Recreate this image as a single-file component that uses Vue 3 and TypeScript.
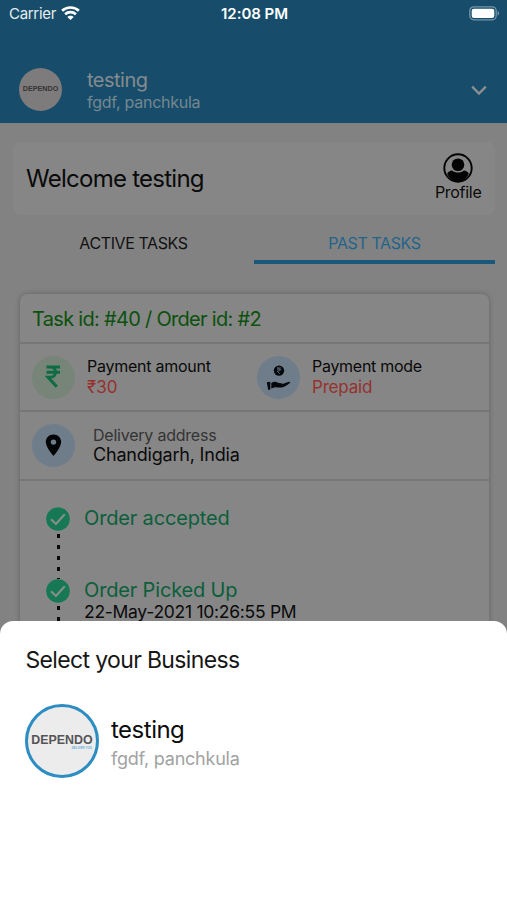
<script setup lang="ts">
interface Step {
  title: string
  time?: string
}

const steps: Step[] = [
  { title: 'Order accepted' },
  { title: 'Order Picked Up', time: '22-May-2021 10:26:55 PM' },
]
const business = { name: 'testing', place: 'fgdf, panchkula' }
</script>

<template>
  <div class="screen">
    <header class="header">
      <div class="status">
        <div class="carrier">
          <span class="carrier-name">Carrier</span>
          <svg width="19" height="15" viewBox="0 0 19 15" fill="none" stroke="#fff" stroke-width="2.6">
            <path d="M1.1 4.800C5.800.3 13.200.3 17.900 4.800" />
            <path d="M4.100 8.200c3-2.800 7.800-2.800 10.800 0" />
            <path d="M6.300 10.900c1.700-1.700 4.700-1.700 6.400 0l-3.200 3.200z" fill="#fff" stroke="none" />
          </svg>
        </div>
        <span class="clock">12:08 PM</span>
        <svg class="battery" width="31" height="15" viewBox="0 0 31 15">
          <rect x=".8" y=".8" width="26.4" height="13" rx="4" fill="none" stroke="#7695a8" stroke-width="1.3" />
          <rect x="2.7" y="2.7" width="22.6" height="9.2" rx="2.2" fill="#fff" />
          <path d="M28.600 5v4.600c2-.7 2-3.900 0-4.600z" fill="#7695a8" />
        </svg>
      </div>
      <div class="account">
        <div class="logo logo-small"><span>DEPENDO</span></div>
        <div class="account-text">
          <span class="account-name">{{ business.name }}</span>
          <span class="account-place">{{ business.place }}</span>
        </div>
        <svg width="16" height="11" viewBox="0 0 16 11" fill="none" stroke="#8b8f92" stroke-width="2.3">
          <path d="M1.200 1.600 8 8.500l6.800-6.900" />
        </svg>
      </div>
    </header>

    <section class="welcome">
      <span class="welcome-text">Welcome testing</span>
      <div class="profile">
        <svg width="30" height="30" viewBox="0 0 30 30">
          <circle cx="15" cy="15" r="13.7" fill="none" stroke="#030303" stroke-width="1.9" />
          <circle cx="15" cy="11.7" r="6.3" fill="#030303" />
          <path d="M4.200 20.500c1-1.800 2.800-2.700 4.900-3 3.200 2.700 8.600 2.700 11.800 0 2.100.3 3.900 1.200 4.900 3-1.900 4.900-6 8-10.800 8s-8.900-3.100-10.800-8z" fill="#030303" />
        </svg>
        <span>Profile</span>
      </div>
    </section>

    <nav class="tabs">
      <span class="tab">ACTIVE TASKS</span>
      <span class="tab selected">PAST TASKS</span>
    </nav>

    <section class="task">
      <h2 class="task-id">Task id: #40 / Order id: #2</h2>
      <div class="row">
        <div class="cell">
          <div class="bubble green">
            <svg class="rupee" width="16" height="23" viewBox="0 0 16 23" fill="none" stroke="#0d6c43" stroke-width="3">
              <path d="M1.500 2h13.500M1.500 7.200h13.500M1.500 2h4.300c6.300 0 6.300 10.200 0 10.200H3l8.800 9.500" />
            </svg>
          </div>
          <div class="info">
            <span class="label amount-label">Payment amount</span>
            <span class="value amount">₹30</span>
          </div>
        </div>
        <div class="cell">
          <div class="bubble blue">
            <svg class="hand" width="25" height="26" viewBox="0 0 25 26" fill="#05080b">
              <circle cx="13" cy="5.6" r="5.2" />
              <path d="M11 3h4.200M11 4.800h4.200M11 3c4 0 4 3.300.3 3.300l2.500 2.500" fill="none" stroke="#66788a" stroke-width=".8" />
              <path d="M.8 17.200l3.500-.4v7.800l-2.100.3zM5.300 17.900c2.300-1.400 4.600-1.500 6.700-.1 1.200.6 3 .3 4.400.5-.2.700-.8.900-1.400 1.100 3.200-.6 5.600-2.400 8.400-2.700 1.300 0 .8 1.200.1 1.600-2.800 2-4.900 3.900-7.900 4.200-2.600.3-4.500-.5-6.700-.2l-3.600 1.100z" />
            </svg>
          </div>
          <div class="info">
            <span class="label mode-label">Payment mode</span>
            <span class="value prepaid">Prepaid</span>
          </div>
        </div>
      </div>
      <div class="row">
        <div class="cell address">
          <div class="bubble blue">
            <svg width="17" height="23" viewBox="0 0 17 23">
              <path fill="#030405" fill-rule="evenodd" d="M8.500.5C4 .5.800 3.900.800 8.100c0 5.300 7.700 14 7.700 14s7.700-8.700 7.700-14C16.200 3.900 13 .5 8.500.5zm0 4.900a2.700 2.700 0 1 1 0 5.400 2.700 2.700 0 0 1 0-5.400z" />
            </svg>
          </div>
          <div class="info">
            <span class="label address-label">Delivery address</span>
            <span class="address-value">Chandigarh, India</span>
          </div>
        </div>
      </div>
      <ol class="steps">
        <li v-for="step in steps" :key="step.title" class="step">
          <div class="marker">
            <svg width="24" height="24" viewBox="0 0 24 24">
              <circle cx="12" cy="12" r="11.8" fill="#177856" />
              <path d="M5 12.200l4.900 4.700 8.900-9.600" fill="none" stroke="#858f8a" stroke-width="2.1" />
            </svg>
            <div class="dashes"></div>
          </div>
          <div class="step-text">
            <span class="step-title">{{ step.title }}</span>
            <span v-if="step.time" class="step-time">{{ step.time }}</span>
          </div>
        </li>
      </ol>
    </section>

    <section class="sheet">
      <h1 class="sheet-title">Select your Business</h1>
      <div class="business">
        <div class="logo logo-large"><span>DEPENDO</span><small>DELIVER YOU</small></div>
        <div class="business-text">
          <span class="business-name">{{ business.name }}</span>
          <span class="business-place">{{ business.place }}</span>
        </div>
      </div>
    </section>
  </div>
</template>

<style>
body {
  margin: 0;
  background: #828282;
}
</style>

<style scoped>
.screen {
  position: relative;
  width: 507px;
  height: 900px;
  overflow: hidden;
  background: #828282;
  color: #0a0a0a;
  font-family: Inter, "Liberation Sans", sans-serif;
  font-size: 16px;
  white-space: nowrap;
}
.screen * { box-sizing: border-box; }
svg { display: block; flex: none; }
h1, h2, ol { margin: 0; padding: 0; font-weight: 400; list-style: none; }

.header { height: 123px; background: #174d6a; }
.status {
  display: grid;
  grid-template-columns: 1fr auto 1fr;
  align-items: center;
  height: 27px;
  padding: 0 7px 0 9px;
  color: #fff;
}
.carrier { display: flex; align-items: center; gap: 5px; }
.carrier-name { font-size: 15px; letter-spacing: -.3px; color: #e6edf1; }
.clock { font-size: 15px; font-weight: 600; letter-spacing: -.05px; }
.battery { justify-self: end; }
.account { display: flex; align-items: flex-start; height: 96px; padding: 0 20px 0 19px; }
.account > svg { margin-top: 58px; }
.account-text { display: flex; flex: 1; flex-direction: column; margin: 42px 0 0 25px; }
.account-name { font-size: 20px; line-height: 22px; letter-spacing: -.5px; color: #858b8f; }
.account-place { font-size: 16px; line-height: 22px; letter-spacing: -.27px; color: #748790; }

.logo {
  display: flex;
  flex: none;
  flex-direction: column;
  align-items: center;
  justify-content: center;
  border-radius: 50%;
  font-family: "Liberation Sans", sans-serif;
  font-weight: 700;
}
.logo-small { width: 43px; height: 43px; margin-top: 41px; background: #7d7b7c; color: #343434; font-size: 7.2px; }
.logo-small span { margin-top: -2px; }
.logo-large { padding-top: 2px; width: 74px; height: 74px; border: 3px solid #2c8dc3; background: #ececed; color: #555457; font-size: 12.4px; }
.logo-large span { line-height: 11px; }
.logo-large small { align-self: flex-end; margin-right: 4px; font-size: 3px; line-height: 4px; color: #69b2d2; }

.welcome {
  display: flex;
  align-items: center;
  justify-content: space-between;
  height: 73px;
  margin: 19px 12px 0 13px;
  padding: 0 13px;
  border-radius: 8px;
  background: #868686;
}
.welcome-text { font-size: 24px; letter-spacing: -.74px; }
.profile { display: flex; flex-direction: column; align-items: center; margin-right: .5px; line-height: 20px; letter-spacing: -.28px; }
.profile svg { margin-top: -2px; }
.profile span { margin-top: -1px; }

.tabs { display: flex; height: 49px; padding: 0 12px 0 13px; }
.tab { flex: 1; padding-top: 18px; border-bottom: 4px solid transparent; line-height: 20px; letter-spacing: -.4px; text-align: center; color: #111; }
.selected { border-color: #1a577b; color: #23648a; }

.task {
  width: 469px;
  height: 400px;
  margin: 30px 0 0 20px;
  border-radius: 7px;
  background: #868686;
  box-shadow: 0 0 5px rgba(0, 0, 0, .25);
}
.task-id { height: 50px; padding-left: 12px; border-bottom: 2px solid #767676; font-size: 20px; line-height: 50px; letter-spacing: -.7px; color: #0b510c; }
.row { display: flex; height: 68px; border-bottom: 2px solid #767676; }
.row + .row { height: 69px; }
.cell { display: flex; flex: none; align-items: center; gap: 12px; width: 225px; padding-left: 12px; }
.bubble { display: flex; flex: none; align-items: center; justify-content: center; width: 43px; height: 43px; border-radius: 50%; }
.green { background: #778478; }
.blue { background: #6f7d8a; }
.rupee { margin: -2px 1px 0 0; }
.hand { margin: 1px 1px 0 0; }
.info { display: flex; flex-direction: column; line-height: 21px; }
.address { gap: 18px; }
.address .info { margin-top: -1px; line-height: 20px; }
.amount-label { letter-spacing: -.25px; }
.mode-label { letter-spacing: -.28px; }
.address-label { letter-spacing: -.22px; color: #343434; }
.value { font-size: 17px; color: #96312f; }
.prepaid { letter-spacing: -.2px; }
.address-value { font-size: 18px; letter-spacing: -.2px; }

.steps { padding: 26px 0 0 26px; }
.step { display: flex; height: 72px; gap: 14px; }
.marker { display: flex; flex-direction: column; align-items: center; width: 24px; }
.dashes {
  flex: 1;
  width: 2.5px;
  margin: 3px 0 0 1px;
  background: repeating-linear-gradient(#080808 0 4px, transparent 4px 11px);
}
.step-text { display: flex; flex-direction: column; }
.step-title { font-size: 20px; line-height: 22px; letter-spacing: -.16px; color: #0b5f3b; }
.step-time { font-size: 17.5px; line-height: 22px; letter-spacing: -.28px; }

.sheet {
  position: absolute;
  inset: 621px 0 0;
  padding: 24px 25px;
  border-radius: 13px 13px 0 0;
  background: #fff;
}
.sheet-title { padding-left: .5px; font-size: 23px; line-height: 31px; letter-spacing: -.65px; color: #171717; }
.business { display: flex; gap: 12px; margin-top: 28px; }
.business-text { display: flex; flex-direction: column; padding-top: 11px; line-height: 29px; }
.business-name { font-size: 24px; letter-spacing: -.5px; color: #0c0c0c; }
.business-place { font-size: 18px; letter-spacing: -.22px; color: #a2a2a2; }
</style>
